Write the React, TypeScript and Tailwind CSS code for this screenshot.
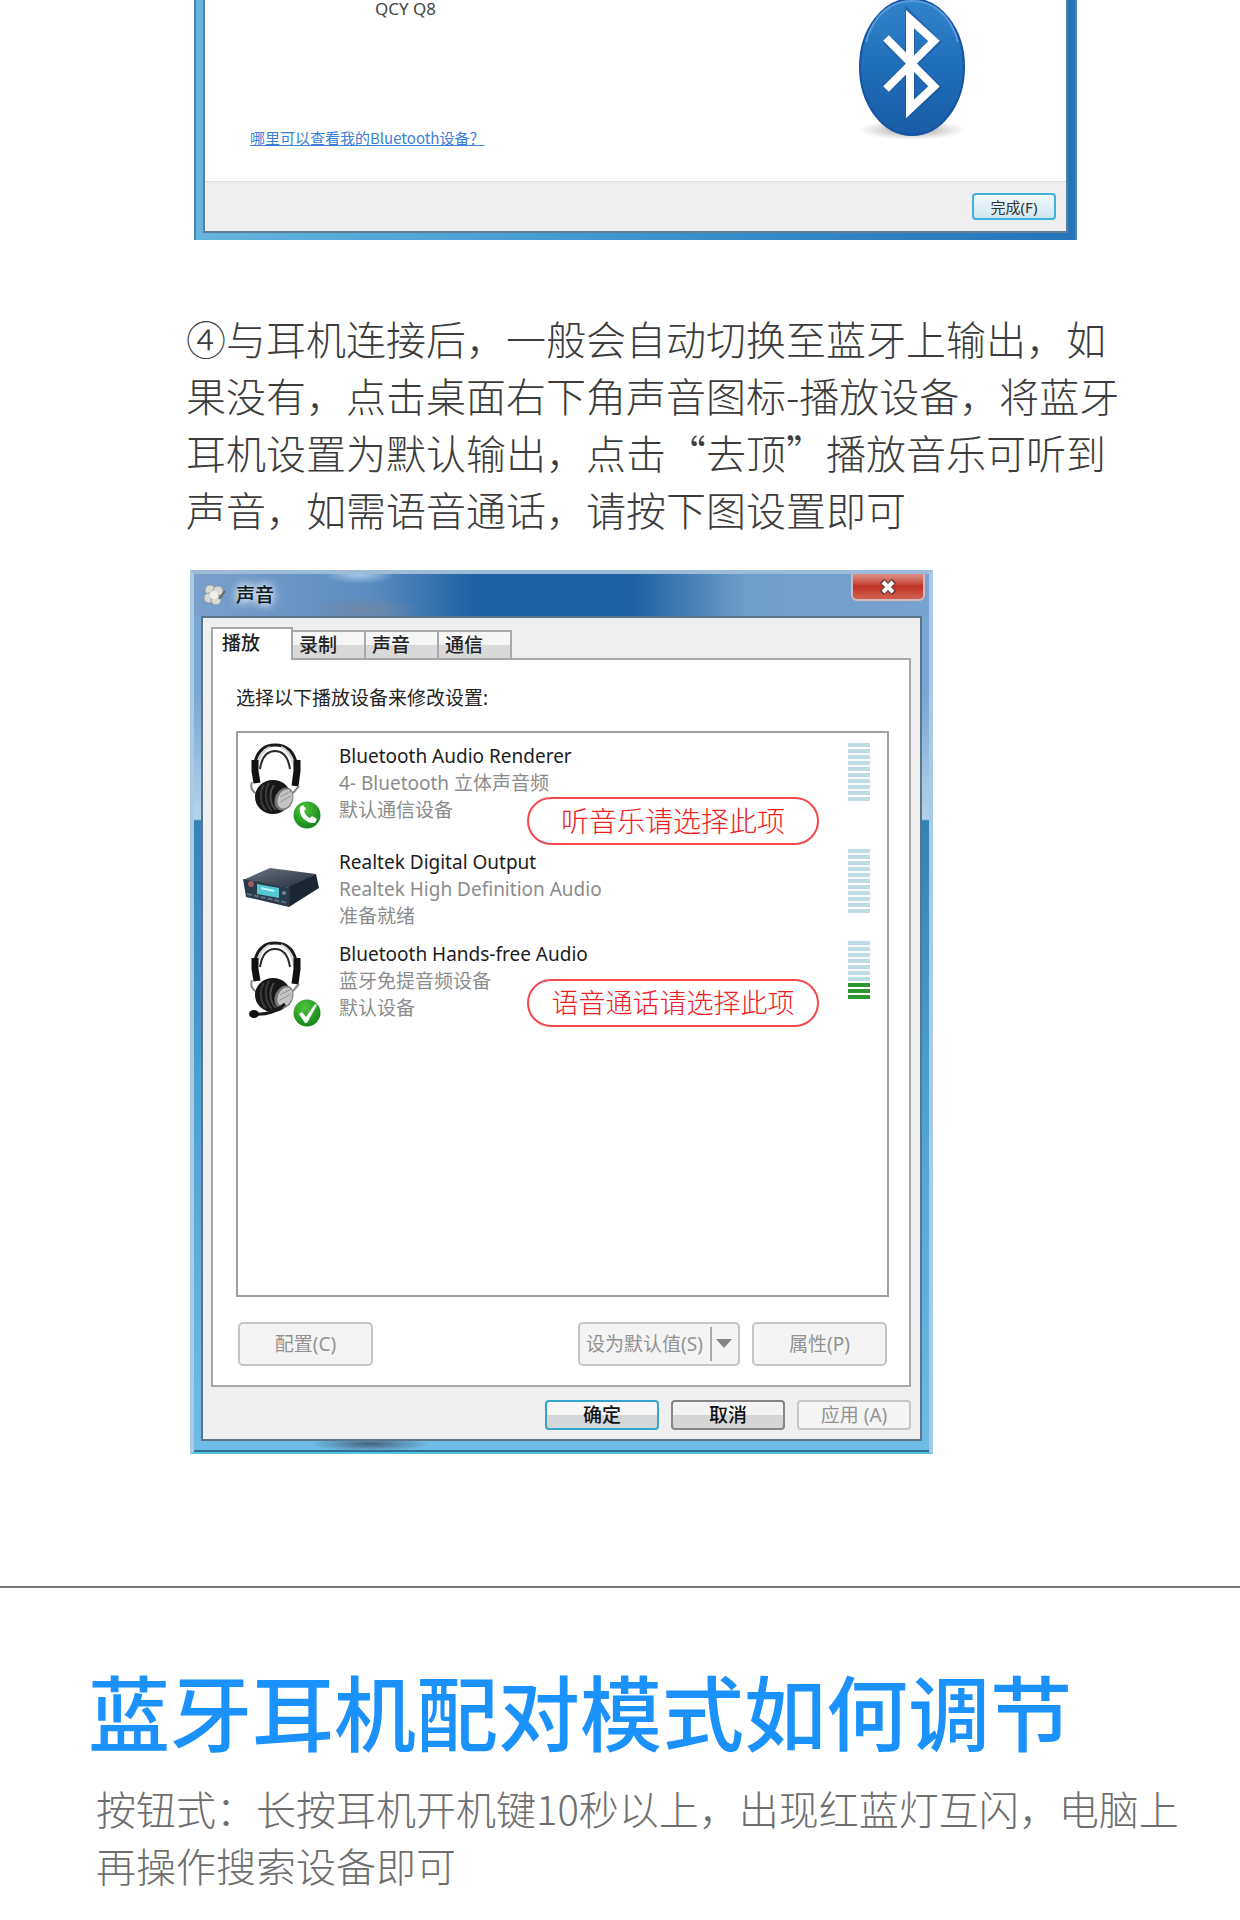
import { ReactNode } from "react";

interface Device {
  id: number;
  name: string;
  detail: string;
  status: string;
  icon: "call" | "box" | "check";
  bars: number;
  active: number;
  rowClass?: string;
  note?: string;
  noteClass?: string;
}

const devices: Device[] = [
  {
    id: 1,
    name: "Bluetooth Audio Renderer",
    detail: "4- Bluetooth 立体声音频",
    status: "默认通信设备",
    icon: "call",
    bars: 10,
    active: 0,
    note: "听音乐请选择此项",
    noteClass: "top-[54px] text-[28px]",
  },
  {
    id: 2,
    name: "Realtek Digital Output",
    detail: "Realtek High Definition Audio",
    status: "准备就绪",
    icon: "box",
    bars: 11,
    active: 0,
    rowClass: "mt-[18px]",
  },
  {
    id: 3,
    name: "Bluetooth Hands-free Audio",
    detail: "蓝牙免提音频设备",
    status: "默认设备",
    icon: "check",
    bars: 10,
    active: 3,
    rowClass: "mt-1",
    note: "语音通话请选择此项",
    noteClass: "top-[38px] text-[27px]",
  },
];

const tabs = ["录制", "声音", "通信"];

const BluetoothLogo = () => (
  <svg className="block h-[144px] w-[120px]" viewBox="0 0 120 144" aria-hidden="true">
    <defs>
      <linearGradient id="btFill" x1="0" y1="0" x2="0" y2="1">
        <stop offset="0" stopColor="#3384cd" />
        <stop offset="0.5" stopColor="#1f6db8" />
        <stop offset="1" stopColor="#1a5da6" />
      </linearGradient>
      <radialGradient id="btShadow">
        <stop offset="0" stopColor="#555" stopOpacity="0.7" />
        <stop offset="1" stopColor="#999" stopOpacity="0" />
      </radialGradient>
    </defs>
    <ellipse cx="60" cy="130" rx="54" ry="10" fill="url(#btShadow)" />
    <ellipse cx="60" cy="67" rx="52" ry="68" fill="url(#btFill)" stroke="#1554a4" strokeWidth="2" />
    <path d="M14 42C22 13 40 1 60 1s38 12 46 41" fill="none" stroke="#69a8de" strokeWidth="2" opacity=".7" />
    <path d="M34 39 83 87 58 110V17L83 42 34 88" fill="none" stroke="#164f91" strokeWidth="10" opacity=".5" />
    <path d="M34 38 82 86.500 58 109V19L82 41 34 89" fill="none" stroke="#fff" strokeWidth="8" />
  </svg>
);

const Headset = ({ mic }: { mic?: boolean }) => (
  <>
    <path d="M5 25C7 8 15 2 26 2s20 6 22 23" fill="none" stroke="#1b1b1b" strokeWidth="3" />
    <path d="M8 25C10 11 16 6 21 4M32 4c6 2 11 7 13 21" fill="none" stroke="#d4d4d4" strokeWidth="2" />
    <path d="M11 26C13 13 18 8 26 8s13 5 15 18" fill="none" stroke="#2a2a2a" strokeWidth="2" />
    <path d="M6 17v11l2 12M48 17v11l-2 15" fill="none" stroke="#111" strokeWidth="7" />
    <path d="M3 39c-2 6 1 10 5 12M50 43l-6 7" fill="none" stroke="#888" strokeWidth="2" />
    <ellipse cx="24" cy="54" rx="18" ry="17" fill="#171717" />
    <path d="M15 42c-5 7-4 19 2 25M20 40c-5 8-4 21 3 28" fill="none" stroke="#3a3a3a" strokeWidth="2" />
    <path d="M25 42c-5 7-5 18 2 25" fill="none" stroke="#4a4a4a" strokeWidth="2" />
    <ellipse cx="35" cy="56" rx="9" ry="12" fill="#777" transform="rotate(24 35 56)" />
    <ellipse cx="36" cy="56" rx="7" ry="10" fill="#c4c4c4" transform="rotate(24 36 56)" />
    <path d="M31 54l11-6M31 59l11-6" stroke="#949494" strokeWidth="1" />
    {mic && (
      <>
        <path d="M5 73c15 1 22-3 31-10" fill="none" stroke="#1a1a1a" strokeWidth="3" />
        <ellipse cx="5" cy="73" rx="5" ry="4" fill="#111" />
      </>
    )}
  </>
);

const DeviceIcon = ({ kind }: { kind: Device["icon"] }) => (
  <svg className="block h-[88px] w-[80px] shrink-0" viewBox="0 0 80 88" aria-hidden="true">
    <defs>
      <radialGradient id="badge" cx="0.4" cy="0.3" r="0.8">
        <stop offset="0" stopColor="#4fc43a" />
        <stop offset="1" stopColor="#0d7f15" />
      </radialGradient>
      <linearGradient id="boxTop" x1="0" y1="0" x2="1" y2="1">
        <stop offset="0" stopColor="#6b7480" />
        <stop offset="1" stopColor="#252f3b" />
      </linearGradient>
    </defs>
    {kind === "box" ? (
      <g>
        <path d="M1 31 28 19l46 6-27 14z" fill="url(#boxTop)" />
        <path d="M47 38 74 25l3 14L47 58z" fill="#1b2632" />
        <path d="M1 30l47 9-1 19L4 48z" fill="#2c3b4a" />
        <path d="M15 35l22 4v10l-22-4z" fill="#55c8d4" />
        <path d="M19 39l13 3" stroke="#b9f6fa" strokeWidth="2" />
        <circle cx="9" cy="35" r="3" fill="#a05a66" />
        <circle cx="42" cy="44" r="2" fill="#6d8696" />
        <path d="M5 45l41 9" stroke="#587083" strokeWidth="2" strokeDasharray="5 2" />
      </g>
    ) : (
      <g>
        <g transform="translate(7 0)">
          <Headset mic={kind === "check"} />
        </g>
        <circle cx="65" cy="72" r="13.500" fill="url(#badge)" />
        {kind === "call" ? (
          <path d="M58 64c-2 8 6 17 15 16l2-4-5-3-2 2c-3-1-5-4-6-7l2-2-3-4z" fill="#fff" />
        ) : (
          <path d="M57 73l3-2 4 5 9-13 2 1-10 18h-2z" fill="#fff" />
        )}
      </g>
    )}
  </svg>
);

const LevelMeter = ({ bars, active }: { bars: number; active: number }) => (
  <div className="flex w-[22px] shrink-0 flex-col gap-[2px]">
    {Array.from({ length: bars }, (_, i) => (
      <div key={i} className={i >= bars - active ? "h-1 bg-[#2f9634]" : "h-1 bg-[#bfdce2]"} />
    ))}
  </div>
);

const DeviceRow = ({ device }: { device: Device }) => (
  <li className={`relative flex pr-[17px] pl-1 ${device.rowClass ?? ""}`}>
    <DeviceIcon kind={device.icon} />
    <div className="ml-[17px] h-[88px] flex-1 text-[19px] leading-[27px] text-[#8c8c8c]">
      <div className="text-[#1c1c1c]">{device.name}</div>
      <div>{device.detail}</div>
      <div>{device.status}</div>
    </div>
    <LevelMeter bars={device.bars} active={device.active} />
    {device.note && (
      <span
        className={`absolute right-[68px] flex h-12 w-[292px] items-center justify-center rounded-full border-2 border-[#f4484c] font-light text-[#ee2026] ${device.noteClass}`}
      >
        {device.note}
      </span>
    )}
  </li>
);

const GrayButton = ({ children }: { children: ReactNode }) => (
  <button className="h-11 w-[135px] rounded-[5px] border-2 border-[#c4c6c5] bg-[#f4f4f4] text-[19px] text-[#929292]">
    {children}
  </button>
);

const PairingWindow = () => (
  <div className="max-w-[883px] border-x-2 border-x-[#4489b4] bg-linear-to-r from-[#65b5de] via-[#3d94ce] to-[#2673b8] px-[7px] pb-[7px]">
    <div className="border-x-2 border-b-2 border-[#5e7f95] bg-white">
      <div className="flex h-[181px] justify-between">
        <div className="flex flex-col justify-between pb-[29px] pl-[45px]">
          <div className="pl-[125px] text-[17px] leading-[18px] text-[#444]">QCY Q8</div>
          <a
            href="#"
            className="font-['Noto_Sans_CJK_SC',sans-serif] text-[15px] leading-[28px] text-[#3a80d8] underline"
          >
            哪里可以查看我的Bluetooth设备？
          </a>
        </div>
        <div className="mr-[94px]">
          <BluetoothLogo />
        </div>
      </div>
      <div className="flex h-[50px] items-center justify-end border-t border-[#dedede] bg-[#efefef] pr-[10px]">
        <button className="h-[27px] w-[84px] rounded-[4px] border-2 border-[#3fb2dc] bg-linear-to-b from-[#f2f8fb] to-[#cfe6f0] text-[15px] leading-[20px] text-[#333]">
          完成(F)
        </button>
      </div>
    </div>
  </div>
);

const SoundWindow = () => (
  <div className="max-w-[743px] border-x-4 border-t-4 border-b-2 border-x-[#a9cbe6] border-t-[#9dbbd9] border-b-[#52c4e4] bg-[linear-gradient(180deg,#79a6d2_0px,#79a6d2_120px,#b4d3ec_245px,#3682b4_247px,#4a9fd0_500px,#6fbce6_100%)]">
    <div className="bg-[radial-gradient(ellipse_36px_10px_at_165px_0px,#a8cdec,transparent),radial-gradient(ellipse_60px_14px_at_170px_36px,#6d87a8,transparent),linear-gradient(90deg,#79a0cc_0%,#5b8cc0_24%,#1f62a3_38%,#1f62a3_60%,#6f9dca_75%,#76a3cf_100%)]">
      <div className="flex h-[42px] justify-between pl-2">
        <div className="flex items-center gap-[10px]">
          <svg className="h-6 w-6" viewBox="0 0 24 24" aria-hidden="true">
            <g fill="#d8d8d5" stroke="#9b9b98" strokeWidth="1">
              <circle cx="8" cy="7" r="5" />
              <circle cx="16" cy="8" r="5" />
              <circle cx="7" cy="15" r="5" />
              <circle cx="14" cy="17" r="5" />
            </g>
            <circle cx="12" cy="12" r="4" fill="#efefec" />
            <path d="M17 16l6-8" stroke="#666" strokeWidth="2" />
          </svg>
          <span className="text-[19px] font-medium text-[#101820] [text-shadow:0_0_8px_#fff,0_0_12px_#fff]">
            声音
          </span>
        </div>
        <button
          aria-label="关闭"
          className="mr-1 flex h-[27px] w-[74px] items-center justify-center rounded-b-[6px] border-2 border-t-0 border-[#d7b7bd] bg-linear-to-b from-[#dd9089] via-[#bf3327] to-[#d0604f]"
        >
          <svg className="h-4 w-5" viewBox="0 0 20 16" aria-hidden="true">
            <path d="M4 2l12 12M16 2L4 14" stroke="#5d3a3a" strokeWidth="6" />
            <path d="M5 3l10 10M15 3L5 13" stroke="#fff" strokeWidth="4" />
          </svg>
        </button>
      </div>
    </div>
    <div className="mx-[7px] border-2 border-[#5b7688] bg-[#efefef] pt-[9px] pr-[9px] pb-[9px] pl-2">
      <div className="flex items-end pr-2">
        <button className="relative z-10 -mb-[2px] h-[33px] w-[82px] border-2 border-b-0 border-[#a8a8aa] bg-white pb-1 pl-[9px] text-left text-[19px] leading-[24px] font-medium text-[#222]">
          播放
        </button>
        {tabs.map((tab) => (
          <button
            key={tab}
            className="h-[28px] w-[73px] border-t-2 border-r-2 border-[#a8a8aa] bg-linear-to-b from-[#f6f6f6] from-50% to-[#d9d9da] to-50% pl-[6px] text-left text-[19px] leading-[24px] font-medium text-[#222]"
          >
            {tab}
          </button>
        ))}
      </div>
      <div className="border-2 border-[#a8a8aa] bg-white pt-6 pr-5 pb-[19px] pl-[23px]">
        <div className="text-[19px] leading-[28px] text-[#222]">选择以下播放设备来修改设置:</div>
        <ul className="mt-[19px] flex h-[566px] flex-col border-2 border-[#a0a0a2] pt-[10px]">
          {devices.map((device) => (
            <DeviceRow key={device.id} device={device} />
          ))}
        </ul>
        <div className="mt-[25px] flex justify-between px-[2px]">
          <GrayButton>配置(C)</GrayButton>
          <div className="flex gap-3">
            <button className="flex h-11 w-[162px] items-center justify-between rounded-[5px] border-2 border-[#c4c6c5] bg-[#f4f4f4] px-[6px] text-[19px] text-[#929292]">
              设为默认值(S)
              <span className="flex h-[34px] items-center border-l-2 border-[#a9a9a9] pl-1">
                <svg className="h-[10px] w-4" viewBox="0 0 16 10" aria-hidden="true">
                  <path d="M0 0h16L8 9z" fill="#858585" />
                </svg>
              </span>
            </button>
            <GrayButton>属性(P)</GrayButton>
          </div>
        </div>
      </div>
      <div className="mt-[13px] flex justify-end gap-3 text-[19px] leading-[24px]">
        <button className="h-[30px] w-[114px] rounded-[4px] border-2 border-[#35a5cb] bg-linear-to-b from-[#f6f6f6] from-50% to-[#d5d6d8] to-50% font-medium text-[#111]">
          确定
        </button>
        <button className="h-[30px] w-[114px] rounded-[4px] border-2 border-[#858587] bg-linear-to-b from-[#f3f3f3] from-50% to-[#d5d5d6] to-50% font-medium text-[#111]">
          取消
        </button>
        <button className="h-[30px] w-[114px] rounded-[4px] border-2 border-[#c6c8c8] bg-[#f4f4f4] text-[#929292]">
          应用 (A)
        </button>
      </div>
    </div>
    <div className="h-[9px] bg-[radial-gradient(ellipse_60px_8px_at_176px_3px,#45647f,transparent)]" />
    <div className="h-[2px] bg-[#2f6f93]" />
  </div>
);

export default function App() {
  return (
    <main
      lang="zh-CN"
      className="min-h-screen bg-white font-['Noto_Sans','Noto_Sans_CJK_SC',sans-serif]"
    >
      <section className="pr-[120px] pb-[132px] pl-[190px]">
        <div className="ml-1">
          <PairingWindow />
        </div>
        <p className="-ml-1 mt-[70px] font-['Noto_Sans_CJK_SC',sans-serif] text-[40px] leading-[57px] font-light whitespace-nowrap text-[#3c3c3c]">
          ④与耳机连接后，一般会自动切换至蓝牙上输出，如
          <br />
          果没有，点击桌面右下角声音图标-播放设备，将蓝牙
          <br />
          耳机设置为默认输出，点击“去顶”播放音乐可听到
          <br />
          声音，如需语音通话，请按下图设置即可
        </p>
        <div className="mt-[32px]">
          <SoundWindow />
        </div>
      </section>
      <section className="border-t-2 border-[#77787a] px-[88px] pt-[68px] font-['Noto_Sans_CJK_SC',sans-serif]">
        <h1 className="text-[82px] leading-[108px] font-medium whitespace-nowrap text-[#1b92fb]">
          蓝牙耳机配对模式如何调节
        </h1>
        <p className="mt-[16px] pl-2 text-[40px] leading-[57px] font-light whitespace-nowrap text-[#6e6e6e]">
          按钮式：长按耳机开机键10秒以上，出现红蓝灯互闪，电脑上
          <br />
          再操作搜索设备即可
        </p>
      </section>
    </main>
  );
}
